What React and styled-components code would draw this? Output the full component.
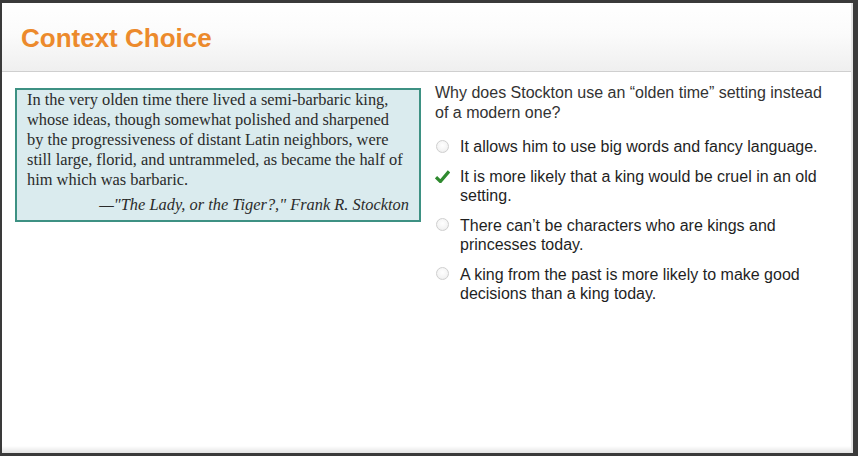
import React from "react";
import styled, { createGlobalStyle } from "styled-components";

const Global = createGlobalStyle`
  html, body { margin: 0; padding: 0; background: #3a3a3a; }
  body { font-family: "Liberation Sans", Arial, sans-serif; }
`;

const Frame = styled.div`
  height: 456px;
  box-sizing: border-box;
  padding: 3px 5px 3px 2px;
  display: flex;
`;

const Panel = styled.div`
  flex: 1;
  background: #fff;
  display: flex;
  flex-direction: column;
  border-right: 2px solid #e4e4e4;
`;

const Header = styled.header`
  height: 69px;
  box-sizing: border-box;
  background: linear-gradient(#ffffff 0%, #fbfbfb 45%, #efefef 100%);
  border-bottom: 1px solid #cfcfcf;
  padding: 0 0 0 19px;
  display: flex;
  align-items: center;
`;

const Title = styled.h1`
  margin: 0;
  font-family: "Liberation Sans", Arial, sans-serif;
  font-weight: bold;
  font-size: 26px;
  color: #ec8a2c;
  line-height: 1;
  padding-top: 1px;
`;

const Content = styled.main`
  flex: 1;
  display: flex;
  gap: 14px;
  padding: 11px 0 0 13px;
  align-items: flex-start;
`;

const Passage = styled.section`
  width: 406px;
  margin-top: 5px;
  box-sizing: border-box;
  background: #daebee;
  border: 2px solid #3d9183;
  padding: 0 10px 5px 10px;
  font-family: "Liberation Serif", "Times New Roman", serif;
  font-size: 16.4px;
  line-height: 20px;
  color: #2b2b2b;
`;

const PassageText = styled.p`
  margin: 0;
`;

const Attribution = styled.p`
  margin: 5px 0 0;
  text-align: right;
  font-style: italic;
`;

const QuestionCol = styled.section`
  width: 393px;
  font-family: "Liberation Sans", Arial, sans-serif;
  font-size: 16px;
  line-height: 19.5px;
  color: #2a2a2a;
`;

const Question = styled.p`
  margin: 0 0 15px;
  color: #333;
`;

const Options = styled.ul`
  list-style: none;
  margin: 0;
  padding: 0;
  display: flex;
  flex-direction: column;
  gap: 10px;
`;

const Option = styled.li`
  display: flex;
  align-items: flex-start;
  gap: 10px;
  color: #1f1f1f;
`;

const Marker = styled.span`
  flex: none;
  width: 15px;
  height: 19.5px;
  display: flex;
  align-items: center;
  justify-content: center;
`;

const Radio = styled.span`
  width: 11px;
  height: 11px;
  border-radius: 50%;
  border: 1px solid #cfcfcf;
  background: radial-gradient(circle at 50% 40%, #ffffff 0%, #f4f4f4 60%, #e6e6e6 100%);
  margin-top: -1px;
`;

const Bottom = styled.div`
  height: 7px;
  background: linear-gradient(#ffffff, #e3e3e3);
`;

const Check = () => (
  <svg width="15" height="13" viewBox="0 0 15 13">
    <path d="M1 7.2 L5.4 11.5 L14 1.4" fill="none" stroke="#2f8a2f" strokeWidth="3.2" strokeLinejoin="miter" />
  </svg>
);

const question = "Why does Stockton use an \u201Colden time\u201D setting instead of a modern one?";

const options = [
  { text: "It allows him to use big words and fancy language.", checked: false },
  { text: "It is more likely that a king would be cruel in an old setting.", checked: true },
  { text: "There can\u2019t be characters who are kings and princesses today.", checked: false },
  { text: "A king from the past is more likely to make good decisions than a king today.", checked: false },
];

export default function App() {
  return (
    <>
      <Global />
      <Frame>
        <Panel>
          <Header>
            <Title>Context Choice</Title>
          </Header>
          <Content>
            <Passage>
              <PassageText>
                In the very olden time there lived a semi-barbaric king, whose ideas, though somewhat polished and sharpened by the progressiveness of distant Latin neighbors, were still large, florid, and untrammeled, as became the half of him which was barbaric.
              </PassageText>
              <Attribution>{"\u2014\"The Lady, or the Tiger?,\" Frank R. Stockton"}</Attribution>
            </Passage>
            <QuestionCol>
              <Question>{question}</Question>
              <Options>
                {options.map((o) => (
                  <Option key={o.text}>
                    <Marker>{o.checked ? <Check /> : <Radio />}</Marker>
                    <span>{o.text}</span>
                  </Option>
                ))}
              </Options>
            </QuestionCol>
          </Content>
          <Bottom />
        </Panel>
      </Frame>
    </>
  );
}
